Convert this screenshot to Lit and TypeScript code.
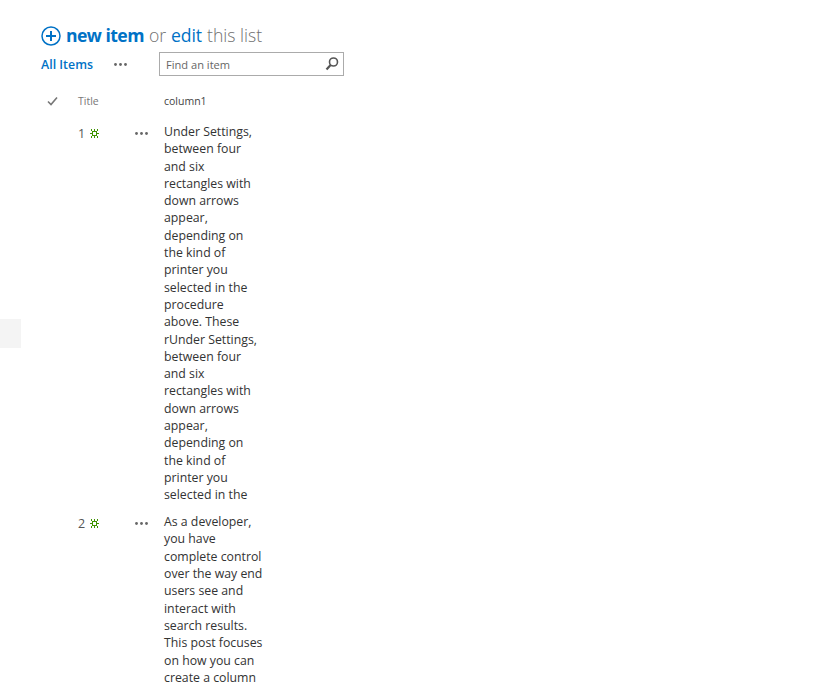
import { LitElement, html, css } from "lit";
import { customElement } from "lit/decorators.js";

const ITEMS = [
  {
    id: 1,
    lines: ["Under Settings,", "between four", "and six", "rectangles with", "down arrows", "appear,", "depending on", "the kind of", "printer you", "selected in the", "procedure", "above. These", "rUnder Settings,", "between four", "and six", "rectangles with", "down arrows", "appear,", "depending on", "the kind of", "printer you", "selected in the"],
  },
  {
    id: 2,
    lines: ["As a developer,", "you have", "complete control", "over the way end", "users see and", "interact with", "search results.", "This post focuses", "on how you can", "create a column"],
  },
];

const dots = html`<svg class="dots" width="13" height="3" viewBox="0 0 13 3"><circle cx="1.5" cy="1.5" r="1.4"/><circle cx="6.5" cy="1.5" r="1.4"/><circle cx="11.5" cy="1.5" r="1.4"/></svg>`;

const star = html`<svg class="star" width="9" height="9" viewBox="0 0 9 9" shape-rendering="crispEdges"><path fill-rule="evenodd" d="M4 0h1v2h2v2h2v1H7v2H5v2H4V7H2V5H0V4h2V2h2zM3 3v3h3V3zM1 0h1v1H1zM7 0h1v1H7zM1 8h1v1H1zM7 8h1v1H7zM1 1h1v1H1zM7 1h1v1H7zM1 7h1v1H1zM7 7h1v1H7z" fill="#3f9400"/></svg>`;

@customElement("app-root")
export class AppRoot extends LitElement {
  static styles = css`
    :host {
      display: block;
      position: relative;
      height: 683px;
      overflow: hidden;
      background: #fff;
      font-family: "Open Sans", "Noto Sans", sans-serif;
      color: #444;
    }
    .page { padding: 21px 0 0 41px; }
    .hero {
      display: flex;
      align-items: center;
      gap: 5px;
      height: 30px;
      font-size: 17.6px;
      font-weight: 300;
      color: #6f6f6f;
      white-space: nowrap;
    }
    .hero .txt { display: flex; gap: 5px; position: relative; top: -1px; }
    .hero b { color: #0072c6; font-weight: 700; letter-spacing: -0.55px; }
    .hero a { color: #0072c6; font-weight: 400; letter-spacing: -0.1px; }
    .toolbar {
      display: flex;
      align-items: center;
      height: 24px;
      margin-top: 1px;
    }
    .all { width: 73px; font-size: 12.4px; font-weight: 600; color: #0072c6; white-space: nowrap; }
    .tool-dots { width: 45px; display: flex; }
    .dots { fill: #666; display: block; }
    .search {
      box-sizing: border-box;
      width: 185px;
      height: 24px;
      border: 1px solid #ababab;
      display: flex;
      align-items: center;
      justify-content: space-between;
      padding: 0 3px 0 6px;
      font-size: 11.1px;
      color: #666;
    }
    .table {
      display: grid;
      grid-template-columns: 37px 57px 29px 110px;
      margin-top: 9px;
      justify-content: start;
    }
    .head { height: 32px; display: flex; align-items: center; font-size: 10.5px; white-space: nowrap; }
    .head.title { color: #777; }
    .head.col { color: #444; }
    .head.check { padding-left: 6px; }
    .cell { padding-top: 6px; padding-bottom: 3.66px; }
    .num { display: flex; justify-content: flex-end; gap: 5px; height: 21px; align-items: center; font-size: 12.5px; color: #555; padding-right: 36px; }
    .more { display: flex; height: 21px; align-items: center; }
    .lines { display: block; }
    .line { display: block; height: 17.3px; line-height: 17.3px; font-size: 12.3px; color: #333; white-space: nowrap; }
    .side { position: absolute; left: 0; top: 319px; width: 21px; height: 29px; background: #f4f4f4; }
  `;

  render() {
    return html`
      <div class="side"></div>
      <div class="page">
        <div class="hero">
          <svg width="20" height="20" viewBox="0 0 20 20"><circle cx="10" cy="10" r="9" fill="none" stroke="#0072c6" stroke-width="1.5"/><path d="M10 5v10M5 10h10" stroke="#0072c6" stroke-width="2" fill="none"/></svg>
          <div class="txt"><b>new item</b><span>or</span><a>edit</a><span>this list</span></div>
        </div>
        <div class="toolbar">
          <div class="all">All Items</div>
          <div class="tool-dots">${dots}</div>
          <div class="search">
            <span>Find an item</span>
            <svg width="16" height="16" viewBox="0 0 16 16"><circle cx="9.5" cy="6" r="4" fill="none" stroke="#555" stroke-width="1.6"/><path d="M6.6 9 2.5 13.5" stroke="#555" stroke-width="2.2" fill="none"/></svg>
          </div>
        </div>
        <div class="table">
          <div class="head check"><svg width="11" height="10" viewBox="0 0 11 10"><path d="M1 5.5 4 8.5 10 1.5" stroke="#777" stroke-width="1.6" fill="none"/></svg></div>
          <div class="head title">Title</div>
          <div class="head"></div>
          <div class="head col">column1</div>
          ${ITEMS.map(
            (it) => html`
              <div></div>
              <div class="cell"><div class="num"><span>${it.id}</span>${star}</div></div>
              <div class="cell"><div class="more">${dots}</div></div>
              <div class="cell lines">${it.lines.map((l) => html`<span class="line">${l}</span>`)}</div>
            `
          )}
        </div>
      </div>
    `;
  }
}
